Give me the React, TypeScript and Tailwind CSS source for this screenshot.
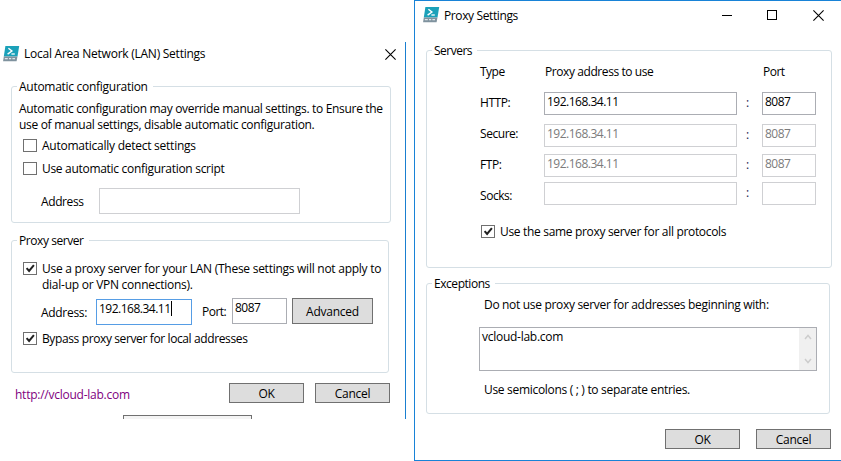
import type { ReactNode } from "react";

function PowerShellIcon({ className = "" }: { className?: string }) {
  return (
    <svg width="17" height="16" viewBox="0 0 17 16" className={`block shrink-0 ${className}`}>
      <path d="M2.4 0H16.2L14.5 10.4H0.8Z" fill="#1ba1b9" />
      <path d="M0.8 10.4H14.5L13.6 15.2H0.1Z" fill="#7f929e" />
      <path d="M1.8 12.7h3M6 12.7h2.2M9.4 12.7h2.6" stroke="#dfe6ea" strokeWidth="1.2" />
      <path d="M5.4 2.2 8.9 5 4.6 8.1" fill="none" stroke="#fff" strokeWidth="1.4" />
      <path d="M8.4 8h3.4" stroke="#fff" strokeWidth="1.3" />
    </svg>
  );
}

function CloseIcon() {
  return (
    <svg width="11" height="11" viewBox="0 0 11 11" className="block">
      <path d="M0.4 0.4 10.6 10.6M10.6 0.4 0.4 10.6" stroke="#000" strokeWidth="1.1" />
    </svg>
  );
}

function Text({ children, className = "" }: { children: ReactNode; className?: string }) {
  return <span className={`block h-4 shrink-0 leading-[18px] whitespace-pre ${className}`}>{children}</span>;
}

function Group({ title, className, titleClass = "", children }: { title: string; className: string; titleClass?: string; children: ReactNode }) {
  return (
    <section className={`flex shrink-0 flex-col rounded-[3px] border border-[#d5dfe5] ${className}`}>
      <h2 className="-mt-[9px] ml-[5px] h-4 w-fit bg-white pr-[5px] pl-[2px]">
        <Text className={titleClass}>{title}</Text>
      </h2>
      {children}
    </section>
  );
}

function Check({ checked = false, label, className = "" }: { checked?: boolean; label: ReactNode; className?: string }) {
  return (
    <label className={`flex items-start ${className}`}>
      <span className="mt-[2px] mr-[5px] h-[13px] w-[14px] shrink-0 border border-[#707070] bg-white">
        {checked && (
          <svg width="12" height="11" viewBox="0 0 12 11" className="block">
            <path d="M2.6 5.2 5.1 8 9.9 2.2" fill="none" stroke="#212121" strokeWidth="2" />
          </svg>
        )}
      </span>
      <span>{label}</span>
    </label>
  );
}

function Button({ children, className }: { children: string; className: string }) {
  return (
    <button className={`flex shrink-0 justify-center border border-[#707070] bg-[#dddddd] tracking-[-0.25px] ${className}`}>
      <Text>{children}</Text>
    </button>
  );
}

function Field({ value, className }: { value: string; className: string }) {
  return (
    <div className={`shrink-0 border ${className}`}>
      <Text className="tracking-[-0.5px]">{value}</Text>
    </div>
  );
}

const servers = [
  { name: "HTTP:", value: "192.168.34.11", port: "8087", row: "mt-[13px]", label: "mt-[2px]", tone: "border-[#abadb3] text-black" },
  { name: "Secure:", value: "192.168.34.11", port: "8087", row: "mt-[9px]", label: "mt-[1px]", tone: "border-[#cfd0d3] text-[#7b7b7b]" },
  { name: "FTP:", value: "192.168.34.11", port: "8087", row: "mt-[7px]", label: "mt-[2px]", tone: "border-[#cfd0d3] text-[#7b7b7b]" },
  { name: "Socks:", value: "", port: "", row: "mt-[5px]", label: "mt-[5px]", tone: "border-[#cfd0d3] text-[#7b7b7b]" },
];

function LanSettings() {
  return (
    <main className="mt-[42px] flex h-[377px] w-[406px] shrink-0 flex-col overflow-hidden border-r border-[#1a7fd0]">
      <header className="flex h-[36px] shrink-0 items-start pt-[3px] pl-[3px]">
        <PowerShellIcon className="mt-px" />
        <Text className="ml-1 tracking-[-0.25px]">Local Area Network (LAN) Settings</Text>
        <button className="mt-[4px] mr-[9px] ml-auto"><CloseIcon /></button>
      </header>

      <Group title="Automatic configuration" className="mt-[8px] ml-[11px] h-[137px] w-[380px]" titleClass="tracking-[-0.28px]">
        <Text className="mt-[6px] ml-[7px] tracking-[-0.32px]">Automatic configuration may override manual settings. to Ensure the</Text>
        <Text className="ml-[7px] tracking-[-0.31px]">use of manual settings, disable automatic configuration.</Text>
        <Check className="mt-[5px] ml-[11px] tracking-[-0.25px]" label={<Text>Automatically detect settings</Text>} />
        <Check className="mt-[7px] ml-[11px] tracking-[-0.3px]" label={<Text>Use automatic configuration script</Text>} />
        <div className="mt-[12px] ml-[29px] flex">
          <Text className="mt-[5px] w-[58px] tracking-[-0.4px]">Address</Text>
          <div className="h-[26px] w-[201px] border border-[#cfd0d3]" />
        </div>
      </Group>

      <Group title="Proxy server" className="mt-[17px] ml-[11px] h-[133px] w-[378px]" titleClass="tracking-[-0.43px]">
        <Check
          checked
          className="mt-[12px] ml-[11px] tracking-[-0.26px]"
          label={<><Text>Use a proxy server for your LAN (These settings will not apply to</Text><Text>dial-up or VPN connections).</Text></>}
        />
        <div className="mt-[6px] ml-[29px] flex h-[27px] items-start">
          <Text className="mt-[6px] w-[55px] tracking-[-0.3px]">Address:</Text>
          <div className="mt-px flex h-[26px] w-[96px] shrink-0 border border-[#569de5] pl-[2px]">
            <Text className="tracking-[-0.5px]">192.168.34.11</Text>
            <i className="mt-px h-[15px] w-px bg-black" />
          </div>
          <Text className="mt-[5px] ml-[10px] w-[30px] tracking-[-0.5px]">Port:</Text>
          <Field value="8087" className="h-[26px] w-[55px] border-[#abadb3] pl-[2px]" />
          <Button className="ml-[5px] h-[26px] w-[81px] pt-[4px]">Advanced</Button>
        </div>
        <Check checked className="mt-[5px] ml-[11px] tracking-[-0.38px]" label={<Text>Bypass proxy server for local addresses</Text>} />
      </Group>

      <footer className="mt-[10px] flex h-[20px] shrink-0 pl-[15px]">
        <Text className="mt-[3px] w-[214px] tracking-[-0.25px] text-[#800080]">http://vcloud-lab.com</Text>
        <Button className="h-[20px] w-[75px] pt-px">OK</Button>
        <Button className="ml-[11px] h-[20px] w-[75px] pt-px">Cancel</Button>
      </footer>
      <div className="mt-[12px] ml-[123px] h-[20px] w-[129px] shrink-0 border border-[#707070] bg-[#f4f4f4]" />
    </main>
  );
}

function ProxySettings() {
  return (
    <section className="ml-[8px] flex h-[461px] w-[427px] shrink-0 flex-col border border-r-0 border-[#1883d7]">
      <header className="flex h-[33px] shrink-0 items-start pt-[6px] pl-[8px]">
        <PowerShellIcon />
        <Text className="ml-[4px] tracking-[-0.38px]">Proxy Settings</Text>
        <div className="mt-[3px] mr-[17px] ml-auto flex">
          <div className="mt-[5px] h-px w-[10px] bg-black" />
          <div className="ml-[35px] h-[10px] w-[10px] border border-black" />
          <div className="ml-[36px]"><CloseIcon /></div>
        </div>
      </header>

      <Group title="Servers" className="mt-[16px] ml-[11px] h-[218px] w-[406px]" titleClass="tracking-[-0.5px]">
        <div className="mt-[5px] ml-[53px] flex">
          <Text className="w-[65px] tracking-[-0.5px]">Type</Text>
          <Text className="w-[218px] tracking-[-0.42px]">Proxy address to use</Text>
          <Text className="tracking-[-0.5px]">Port</Text>
        </div>
        {servers.map((s) => (
          <div key={s.name} className={`ml-[53px] flex h-[23px] shrink-0 items-start ${s.row}`}>
            <Text className={`w-[64px] tracking-[-0.45px] ${s.label}`}>{s.name}</Text>
            <Field value={s.value} className={`h-[23px] w-[193px] pl-[2px] ${s.tone}`} />
            <Text className="mt-[2px] w-[25px] pl-[9px] text-[#1c1c50]">:</Text>
            <Field value={s.port} className={`h-[23px] w-[54px] pl-[2px] ${s.tone}`} />
          </div>
        ))}
        <Check checked className="mt-[18px] ml-[54px] tracking-[-0.32px]" label={<Text>Use the same proxy server for all protocols</Text>} />
      </Group>

      <Group title="Exceptions" className="mt-[15px] ml-[11px] h-[131px] w-[404px]" titleClass="tracking-[-0.45px]">
        <Text className="mt-[5px] ml-[57px] tracking-[-0.32px]">Do not use proxy server for addresses beginning with:</Text>
        <div className="mt-[15px] ml-[52px] flex h-[44px] w-[338px] shrink-0 justify-between border border-[#abadb3] pl-[2px]">
          <Text className="tracking-[-0.27px]">vcloud-lab.com</Text>
          <div className="flex w-[17px] flex-col items-center justify-between bg-[#f0f0f0] py-[6px]">
            <svg width="8" height="6" viewBox="0 0 8 6"><path d="M1 5 4 1.5 7 5" fill="none" stroke="#cdcdcd" strokeWidth="1.5" /></svg>
            <svg width="8" height="6" viewBox="0 0 8 6"><path d="M1 1 4 4.5 7 1" fill="none" stroke="#cdcdcd" strokeWidth="1.5" /></svg>
          </div>
        </div>
        <Text className="mt-[10px] ml-[57px] tracking-[-0.31px]">Use semicolons ( ; ) to separate entries.</Text>
      </Group>

      <footer className="mt-[15px] flex h-[20px] shrink-0 pl-[250px]">
        <Button className="h-[20px] w-[75px] pt-px">OK</Button>
        <Button className="ml-[16px] h-[20px] w-[75px] pt-px">Cancel</Button>
      </footer>
    </section>
  );
}

export default function App() {
  return (
    <div className="flex h-[461px] w-[841px] items-start overflow-hidden bg-white font-['Open_Sans','Noto_Sans',sans-serif] text-[12px] text-black">
      <LanSettings />
      <ProxySettings />
    </div>
  );
}
